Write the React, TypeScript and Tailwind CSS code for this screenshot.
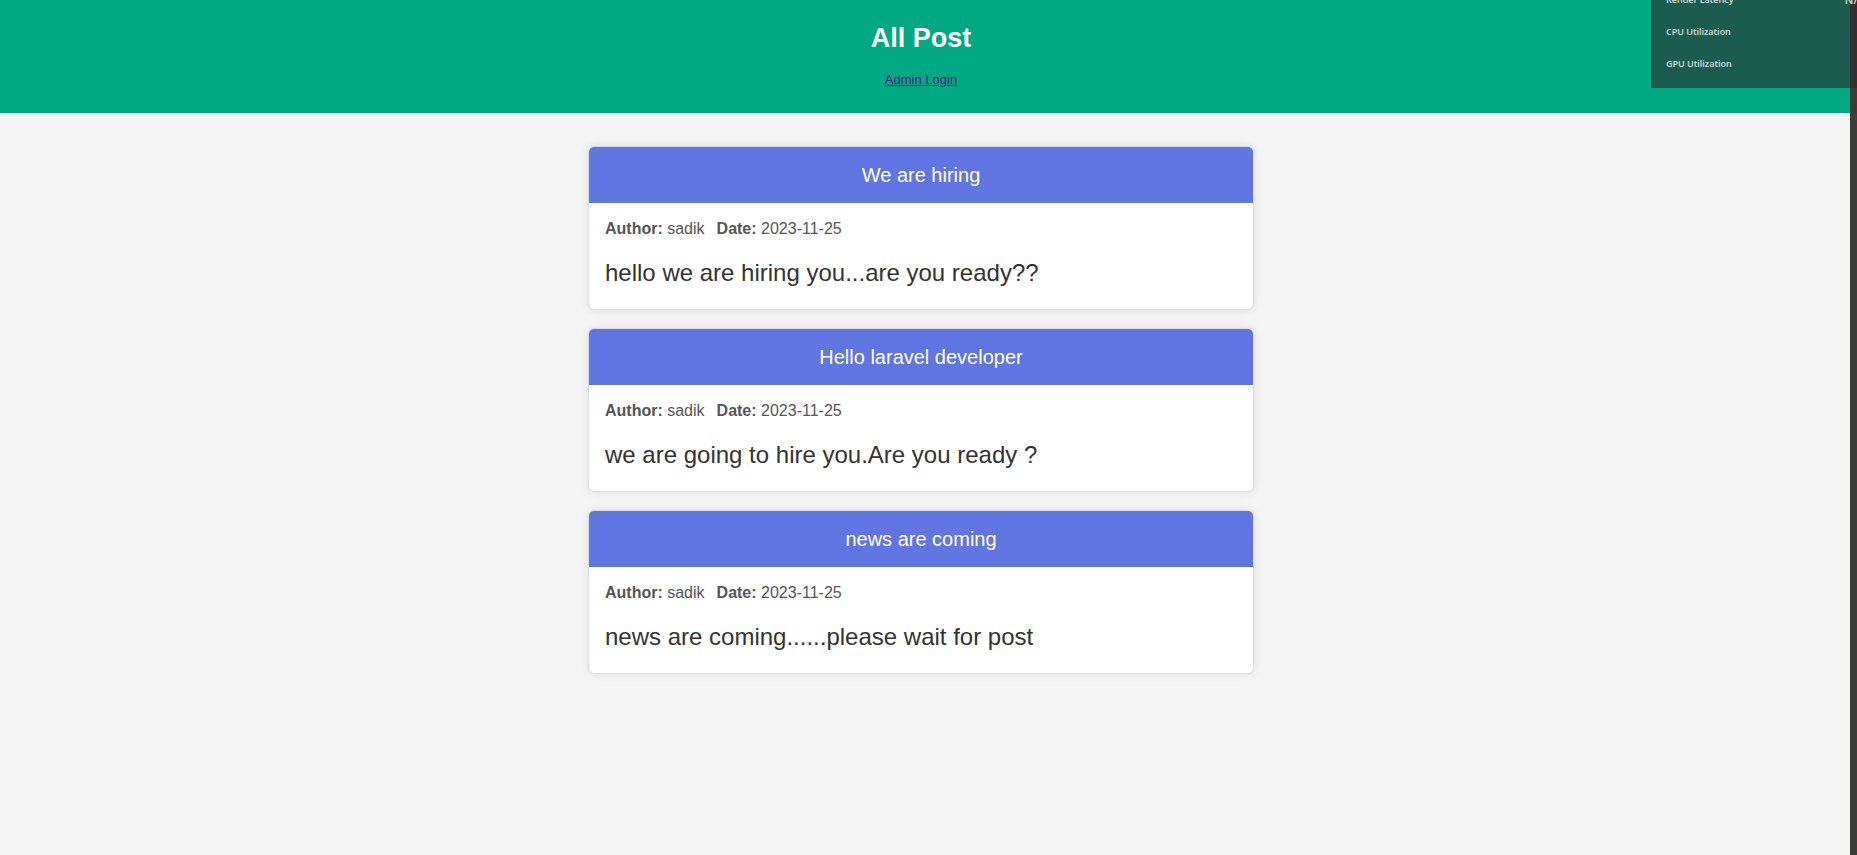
interface Post {
  title: string;
  author: string;
  date: string;
  body: string;
}

const posts: Post[] = [
  { title: 'We are hiring', author: 'sadik', date: '2023-11-25', body: 'hello we are hiring you...are you ready??' },
  { title: 'Hello laravel developer', author: 'sadik', date: '2023-11-25', body: 'we are going to hire you.Are you ready ?' },
  { title: 'news are coming', author: 'sadik', date: '2023-11-25', body: 'news are coming......please wait for post' },
];

const metrics = [
  { label: 'Render Latency', value: 'N/A' },
  { label: 'CPU Utilization', value: '' },
  { label: 'GPU Utilization', value: '' },
];

function PostCard({ post }: { post: Post }) {
  return (
    <article className="overflow-hidden rounded-md border border-[#dddddd] bg-white shadow-[0_0_10px_rgba(0,0,0,0.1)]">
      <h2 className="bg-[#6074e2] px-4 py-4 text-center text-[20px] leading-6 text-white">{post.title}</h2>
      <div className="px-4 pt-[17px] pb-[22px]">
        <p className="flex gap-3 text-base leading-[18px] text-[#555555]">
          <span><strong>Author:</strong> {post.author}</span>
          <span><strong>Date:</strong> {post.date}</span>
        </p>
        <p className="mt-[21px] text-2xl leading-7 text-[#333333]">{post.body}</p>
      </div>
    </article>
  );
}

function MetricsOverlay() {
  return (
    <dl className="absolute -top-4 right-0 w-[206px] bg-[#2d2d2d]/62 pb-2 pl-[15px] font-['Open_Sans',sans-serif] text-[9px] text-white/80">
      {metrics.map((m) => (
        <div key={m.label} className="flex h-8 items-center justify-between">
          <dt className="font-semibold">{m.label}</dt>
          <dd className="-mr-2 text-[11px] leading-5 font-semibold">{m.value}</dd>
        </div>
      ))}
    </dl>
  );
}

export default function App() {
  return (
    <div className="relative flex min-h-screen overflow-hidden bg-[#f5f5f5] font-['Liberation_Sans',Arial,sans-serif]">
      <div className="min-w-0 flex-1">
        <header className="flex flex-col items-center gap-4 bg-[#00a884] pt-5 pr-2 pb-[25px] text-center">
          <h1 className="text-[27px] leading-9 font-bold text-white">All Post</h1>
          <a href="#login" className="text-[13px] leading-4 text-[#551a8b] underline">Admin Login</a>
        </header>
        <main className="flex justify-center pt-[33px] pr-2 pb-8">
          <div className="flex w-full max-w-[666px] flex-col gap-[18px]">
            {posts.map((post) => (
              <PostCard key={post.title} post={post} />
            ))}
          </div>
        </main>
      </div>
      <div className="w-[7px] shrink-0 bg-[#3c3c3a]" />
      <MetricsOverlay />
    </div>
  );
}
